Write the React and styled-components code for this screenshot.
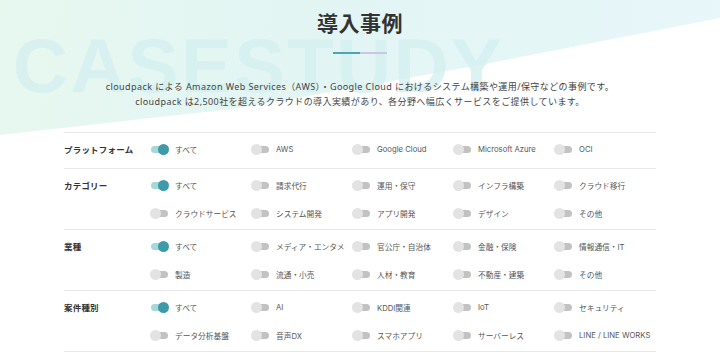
import styled, { createGlobalStyle } from "styled-components";

const GlobalStyle = createGlobalStyle`
  * { box-sizing: border-box; }
  html, body { margin: 0; padding: 0; background: #fff; overflow: hidden; }
  body { font-family: "Liberation Sans", "Noto Sans CJK JP", sans-serif; color: #333; }
`;

const Page = styled.div`
  width: 720px;
  height: 362px;
  position: relative;
  overflow: hidden;
`;

const Hero = styled.header`
  position: relative;
  padding-top: 8px;
  text-align: center;

  &::before {
    content: "";
    position: absolute;
    left: 0;
    top: 0;
    width: 100%;
    height: 140px;
    background: linear-gradient(100deg, #e7f8ef 0%, #e2f5f4 45%, #e8f7fa 100%);
    clip-path: polygon(0 0, 100% 0, 100% 18px, 66.7% 65px, 33.3% 108px, 0 135px);
    z-index: 0;
  }
`;

const Watermark = styled.div`
  position: absolute;
  left: 13px;
  top: 26px;
  font-family: "Liberation Sans", sans-serif;
  font-weight: 700;
  font-size: 76px;
  line-height: 80px;
  letter-spacing: 2.5px;
  color: #d5f0f0;
  opacity: 0.8;
  z-index: 0;
  white-space: nowrap;
  user-select: none;
`;

const HeroInner = styled.div`
  position: relative;
  z-index: 1;
`;

const Title = styled.h2`
  margin: 0;
  font-family: "Noto Sans CJK JP", sans-serif;
  font-weight: 700;
  font-size: 21px;
  line-height: 28px;
  letter-spacing: 0.5px;
  color: #333;
`;

const Underline = styled.div`
  display: flex;
  justify-content: center;
  margin-top: 16px;
`;

const Bar = styled.span`
  width: 27px;
  height: 2px;
  background: ${(p) => p.$color};
`;

const Lead = styled.p`
  margin: 25px 0 0;
  font-family: "Noto Sans", "Noto Sans CJK JP", sans-serif;
  font-size: 9px;
  line-height: 15px;
  letter-spacing: 0.42px;
  color: #444;
`;

const Filters = styled.div`
  width: 592px;
  margin: 23px auto 0;
  border-top: 1px solid #e8e8e8;
  position: relative;
  z-index: 1;
`;

const FilterRow = styled.div`
  display: grid;
  grid-template-columns: 86px 1fr;
  align-items: start;
  min-height: 36px;
  padding: 4px 0;
  border-bottom: 1px solid #e8e8e8;
`;

const RowLabel = styled.div`
  font-family: "Noto Sans CJK JP", sans-serif;
  font-weight: 700;
  font-size: 8.5px;
  line-height: 24px;
  color: #333;
  letter-spacing: 0.2px;
`;

const Options = styled.div`
  display: grid;
  grid-template-columns: repeat(5, 101px);
  row-gap: 4px;
`;

const Option = styled.label`
  display: flex;
  align-items: center;
  height: 24px;
  gap: 6px;
  font-family: "Inter", "Noto Sans CJK JP", sans-serif;
  font-size: 7.7px;
  color: #555;
  white-space: nowrap;
  cursor: pointer;
`;

const Toggle = styled.span`
  position: relative;
  flex: none;
  width: 19px;
  height: 11px;

  &::before {
    content: "";
    position: absolute;
    left: 1px;
    top: 2px;
    width: 17px;
    height: 7px;
    border-radius: 4px;
    background: ${(p) => (p.$on ? "#a6d7db" : "#c2c2c2")};
  }

  &::after {
    content: "";
    position: absolute;
    top: 0;
    left: ${(p) => (p.$on ? "8px" : "0")};
    width: 11px;
    height: 11px;
    border-radius: 50%;
    background: ${(p) => (p.$on ? "#3d9aa8" : "#e3e3e3")};
  }
`;

const groups = [
  {
    label: "プラットフォーム",
    items: ["すべて", "AWS", "Google Cloud", "Microsoft Azure", "OCI"],
  },
  {
    label: "カテゴリー",
    items: [
      "すべて",
      "請求代行",
      "運用・保守",
      "インフラ構築",
      "クラウド移行",
      "クラウドサービス",
      "システム開発",
      "アプリ開発",
      "デザイン",
      "その他",
    ],
  },
  {
    label: "業種",
    items: [
      "すべて",
      "メディア・エンタメ",
      "官公庁・自治体",
      "金融・保険",
      "情報通信・IT",
      "製造",
      "流通・小売",
      "人材・教育",
      "不動産・建築",
      "その他",
    ],
  },
  {
    label: "案件種別",
    items: [
      "すべて",
      "AI",
      "KDDI関連",
      "IoT",
      "セキュリティ",
      "データ分析基盤",
      "音声DX",
      "スマホアプリ",
      "サーバーレス",
      "LINE / LINE WORKS",
    ],
  },
];

export default function App() {
  return (
    <Page>
      <GlobalStyle />
      <Hero>
        <Watermark>CASESTUDY</Watermark>
        <HeroInner>
          <Title>導入事例</Title>
          <Underline>
            <Bar $color="#4aa6b5" />
            <Bar $color="#c9c8e2" />
          </Underline>
          <Lead>
            cloudpack による Amazon Web Services（AWS）・Google Cloud におけるシステム構築や運用/保守などの事例です。
            <br />
            cloudpack は2,500社を超えるクラウドの導入実績があり、各分野へ幅広くサービスをご提供しています。
          </Lead>
        </HeroInner>
      </Hero>
      <Filters>
        {groups.map((g) => (
          <FilterRow key={g.label}>
            <RowLabel>{g.label}</RowLabel>
            <Options>
              {g.items.map((item, i) => (
                <Option key={item + i}>
                  <Toggle $on={i === 0} />
                  {item}
                </Option>
              ))}
            </Options>
          </FilterRow>
        ))}
      </Filters>
    </Page>
  );
}
